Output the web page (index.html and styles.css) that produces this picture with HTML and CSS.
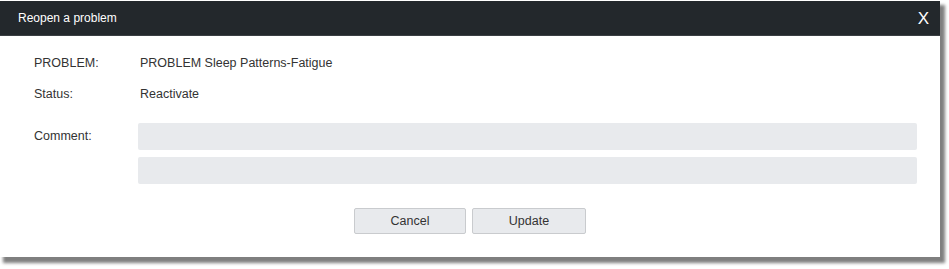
FILE: index.html
```html
<!DOCTYPE html>
<html>
<head>
<meta charset="utf-8">
<link rel="stylesheet" href="styles.css">
</head>
<body>
<div class="dialog">
  <div class="dialog-header">
    <span class="dialog-title">Reopen a problem</span>
    <span class="dialog-close">X</span>
  </div>
  <div class="dialog-body">
    <div class="row">
      <div class="label">PROBLEM:</div>
      <div class="value">PROBLEM Sleep Patterns-Fatigue</div>
    </div>
    <div class="row">
      <div class="label">Status:</div>
      <div class="value">Reactivate</div>
    </div>
    <div class="comment-row">
      <div class="label comment-label">Comment:</div>
      <div class="inputs">
        <div class="field"></div>
        <div class="field"></div>
      </div>
    </div>
    <div class="actions">
      <button class="btn btn-cancel">Cancel</button>
      <button class="btn btn-update">Update</button>
    </div>
  </div>
</div>
</body>
</html>
```
FILE: styles.css
```css
html, body {
  margin: 0;
  padding: 0;
  background: #ffffff;
}
body {
  font-family: "Liberation Sans", Arial, sans-serif;
  font-size: 12.5px;
  color: #333333;
  padding-top: 1px;
  min-height: 268px;
}
.dialog {
  width: 940px;
  background: #ffffff;
  box-shadow: 4px 5px 3px 1px rgba(0, 0, 0, 0.5);
}
.dialog-header {
  height: 35px;
  background: #23282c;
  color: #ffffff;
  display: flex;
  align-items: center;
  justify-content: space-between;
  padding: 0 11px 0 18px;
  border-bottom: 1px solid #3a3f43;
  box-sizing: border-box;
}
.dialog-title {
  font-size: 12px;
}
.dialog-close {
  font-size: 17px;
  line-height: 1;
}
.dialog-body {
  padding: 17px 23px 23px 34px;
}
.row {
  display: flex;
  height: 31px;
  line-height: 20px;
}
.label {
  width: 104px;
  flex: none;
}
.value {
  padding-left: 2px;
}
.comment-row {
  display: flex;
  margin-top: 8px;
}
.comment-label {
  line-height: 27px;
}
.inputs {
  flex: 1;
  display: flex;
  flex-direction: column;
  gap: 7px;
}
.field {
  height: 27px;
  background: #e8eaed;
  border-radius: 2px;
}
.actions {
  display: flex;
  justify-content: center;
  gap: 6px;
  margin-top: 24px;
  margin-left: -34px;
  margin-right: -23px;
}
.btn {
  height: 26px;
  background: #e8eaed;
  border: 1px solid #c9cbce;
  border-radius: 2px;
  font-family: "Liberation Sans", Arial, sans-serif;
  font-size: 12.5px;
  color: #333333;
  padding: 0;
}
.btn-cancel {
  width: 112px;
}
.btn-update {
  width: 114px;
}
```
